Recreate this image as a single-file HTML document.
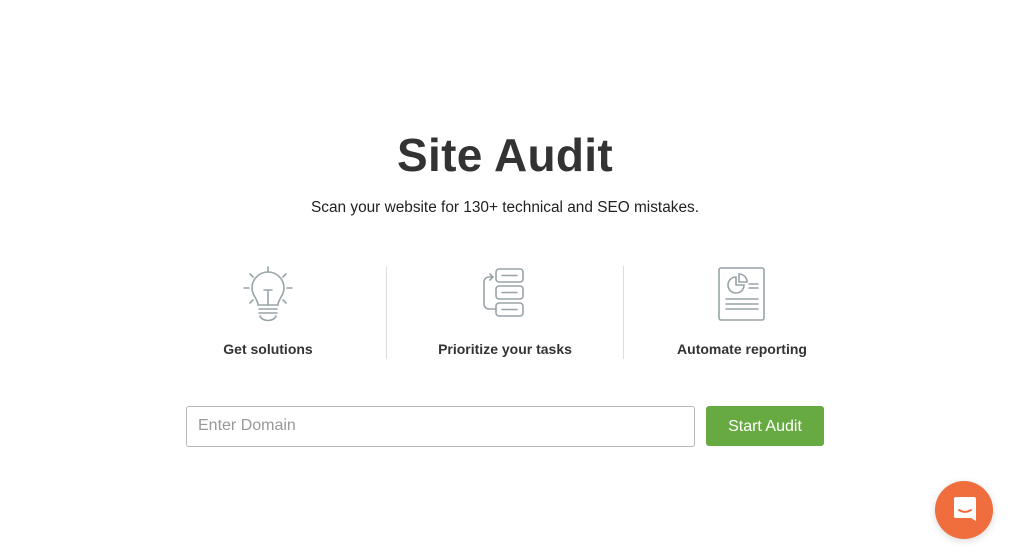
<!DOCTYPE html><html><head><style>
body{margin:0;width:1010px;height:559px;background:#fff;font-family:"Liberation Sans",sans-serif;position:relative;overflow:hidden;color:#333}
.a{position:absolute}
h1{position:absolute;left:0;width:1010px;top:128px;margin:0;text-align:center;font-size:46px;font-weight:bold;color:#333;letter-spacing:0.3px}
.sub{left:0;width:1010px;top:199px;text-align:center;font-size:15.4px;color:#222}
.lab{top:341px;width:200px;text-align:center;font-size:14px;font-weight:bold;color:#333}
.div{width:1px;background:#ddd;top:266px;height:93px}
</style></head><body>
<h1>Site Audit</h1>
<div class="a sub">Scan your website for 130+ technical and SEO mistakes.</div>
<div class="a div" style="left:386px"></div>
<div class="a div" style="left:623px"></div>
<svg class="a" style="left:240px;top:262px" width="56" height="64" viewBox="0 0 56 64" fill="none" stroke="#98a4a8" stroke-width="1.6" stroke-linecap="round">
<path d="M28 5v5M10 12l3 3M46 12l-3 3M4 26h5M47 26h5M10 41l3-3M46 41l-3-3"/>
<path d="M18 43c0-6-6-9-6-17a16 16 0 0 1 32 0c0 8-6 11-6 17z"/>
<path d="M24 28h8M28 28v15"/><path d="M19 47h18M19 51h18M20 54c2 6 14 6 16 0"/></svg>
<svg class="a" style="left:480px;top:266px" width="48" height="56" viewBox="0 0 48 56" fill="none" stroke="#98a4a8" stroke-width="1.6" stroke-linecap="round">
<rect x="16" y="3" width="27" height="13" rx="3"/><rect x="16" y="20" width="27" height="13" rx="3"/><rect x="16" y="37" width="27" height="13" rx="3"/>
<path d="M22 9.5h15M22 26.5h15M22 43.5h15"/><path d="M16 43H9a5 5 0 0 1-5-5V16a5 5 0 0 1 5-5h4M10 8l3 3-3 3"/></svg>
<svg class="a" style="left:716px;top:265px" width="52" height="58" viewBox="0 0 52 58" fill="none" stroke="#98a4a8" stroke-width="1.6" stroke-linecap="round">
<rect x="3" y="3" width="45" height="52" rx="2"/><path d="M20 12v8h8a8 8 0 1 1-8-8z"/><path d="M23 9a8 8 0 0 1 8 8h-8z"/><path d="M33 19h9M33 23h9M10 34h32M10 39h32M10 44h32"/></svg>
<div class="a lab" style="left:168px">Get solutions</div>
<div class="a lab" style="left:405px">Prioritize your tasks</div>
<div class="a lab" style="left:642px">Automate reporting</div>
<div class="a" style="left:186px;top:406px;width:507px;height:39px;border:1px solid #b8b8b8;border-radius:3px"><span style="position:absolute;left:11px;top:10px;font-size:16px;color:#999">Enter Domain</span></div>
<div class="a" style="left:706px;top:406px;width:118px;height:40px;background:#68aa42;border-radius:3px;color:#fff;font-size:16px;text-align:center;line-height:41px">Start Audit</div>
<div class="a" style="left:935px;top:481px;width:58px;height:58px;border-radius:50%;background:#f06e3e;box-shadow:0 2px 8px rgba(0,0,0,.15)"></div>
<svg class="a" style="left:950px;top:495px" width="30" height="30" viewBox="0 0 30 30"><path d="M4 4a2 2 0 0 1 2-2h18a2 2 0 0 1 2 2v22l-5-3H6a2 2 0 0 1-2-2z" fill="#fff"/><path d="M9 15c4 2.5 8 2.5 12 0" stroke="#f06e3e" stroke-width="2" fill="none" stroke-linecap="round"/></svg>
</body></html>
